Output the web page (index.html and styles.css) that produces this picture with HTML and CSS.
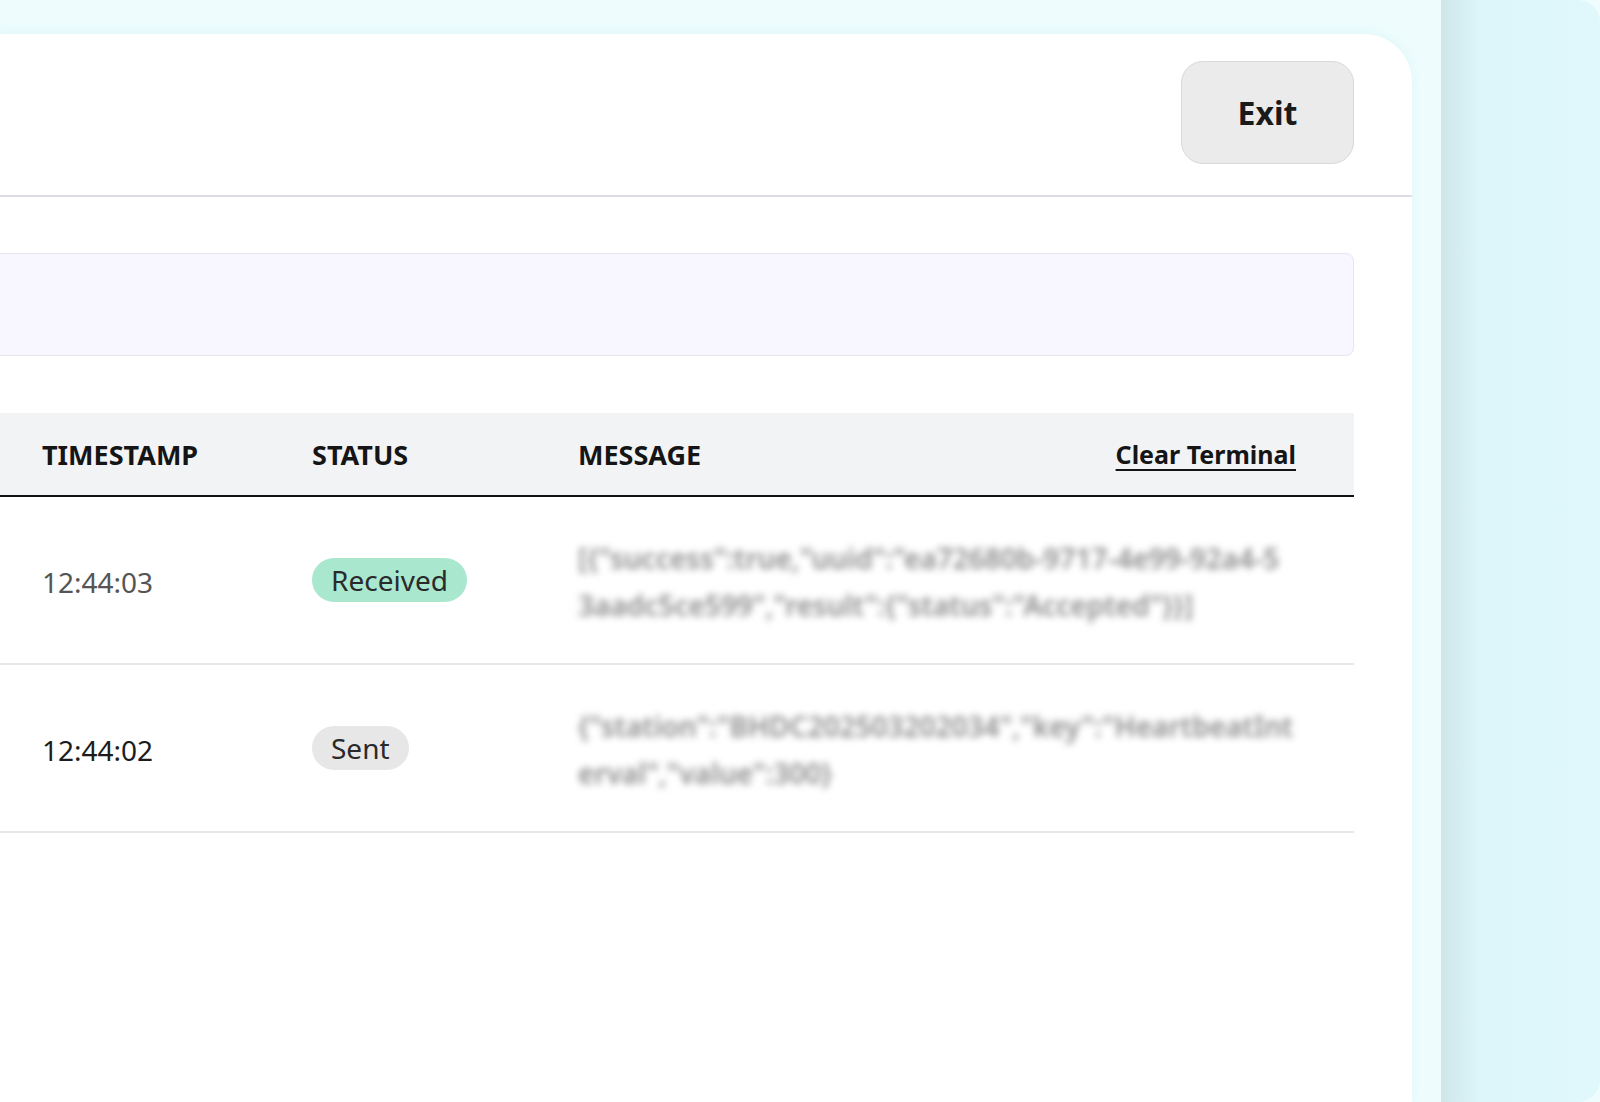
FILE: index.html
```html
<!DOCTYPE html>
<html lang="en">
<head>
  <meta charset="UTF-8" />
  <title>Terminal</title>
  <link rel="stylesheet" href="styles.css">
</head>
<body>
  <div class="stage">
    <!-- Main card -->
    <div class="card">
      <div class="card-header">
        <button class="exit-btn">Exit</button>
      </div>

      <div class="card-body">
        <div class="input-box"></div>

        <div class="log-table">
          <div class="log-head">
            <span>TIMESTAMP</span>
            <span>STATUS</span>
            <span>MESSAGE</span>
            <a href="#" class="clear-link">Clear Terminal</a>
          </div>

          <div class="log-row">
            <span class="time muted">12:44:03</span>
            <span><span class="badge received">Received</span></span>
            <span class="msg">[{"success":true,"uuid":"ea72680b-9717-4e99-92a4-53aadc5ce599","result":{"status":"Accepted"}}]</span>
          </div>

          <div class="log-row">
            <span class="time">12:44:02</span>
            <span><span class="badge sent">Sent</span></span>
            <span class="msg">{"station":"BHDC202503202034","key":"HeartbeatInterval","value":300}</span>
          </div>
        </div>
      </div>
    </div>

    <!-- Side panel -->
    <div class="side"></div>
  </div>
</body>
</html>
```

FILE: styles.css
```css
body {
  margin: 0;
  padding: 0;
  font-family: 'Noto Sans', 'Open Sans', sans-serif;
  background: #eefcfd;
  overflow: hidden;
}
.stage {
  display: flex;
  height: 1102px;
}
.card {
  width: 1412px;
  flex-shrink: 0;
  margin-top: 34px;
  background: #fff;
  border-top-right-radius: 48px;
  box-shadow: 0 -2px 10px rgba(200, 240, 240, 0.35);
}
.card-header {
  display: flex;
  justify-content: flex-end;
  padding: 27px 58px 31px 0;
  border-bottom: 2px solid #dddbe5;
}
.exit-btn {
  width: 173px;
  height: 103px;
  background: #ebebeb;
  border: 1px solid #d9d9d9;
  border-radius: 22px;
  font-family: inherit;
  font-size: 32px;
  font-weight: 700;
  color: #1a1a1a;
  cursor: pointer;
}
.card-body {
  padding: 56px 58px 0 0;
}
.input-box {
  height: 101px;
  margin-left: -20px;
  background: #f8f6fe;
  border: 1px solid #e6e4ee;
  border-radius: 8px;
}
.log-table {
  margin-top: 57px;
}
.log-head, .log-row {
  display: grid;
  grid-template-columns: 270px 266px 1fr auto;
  align-items: center;
  padding: 0 58px 0 42px;
}
.log-head {
  height: 82px;
  background: #f2f3f5;
  border-bottom: 2px solid #111;
  font-size: 27px;
  font-weight: 700;
  color: #151515;
}
.clear-link {
  color: #151515;
  font-size: 25px;
  text-decoration: underline;
  text-underline-offset: 5px;
}
.log-row {
  height: 166px;
  border-bottom: 2px solid #e6e6e6;
  padding-right: 60px;
  grid-template-columns: 270px 266px 1fr;
}
.time {
  font-size: 28px;
  color: #1c1c1c;
  padding-top: 3px;
}
.time.muted {
  color: #555;
}
.badge {
  display: inline-block;
  padding: 0 19px;
  height: 44px;
  line-height: 44px;
  border-radius: 22px;
  font-size: 28px;
  color: #2a2a2a;
}
.badge.received {
  background: #a9e7cf;
}
.badge.sent {
  background: #e7e7e7;
}
.msg {
  font-size: 28px;
  font-weight: 600;
  line-height: 47px;
  padding-top: 4px;
  color: #8c8c8c;
  word-break: break-all;
  filter: blur(3.5px);
}
.side {
  flex: 1;
  margin-left: 29px;
  background: linear-gradient(90deg, #cfe6ea 0, #dcf6f9 40px, #e0f8fb 100%);
  border-radius: 0 22px 22px 0;
}
```
